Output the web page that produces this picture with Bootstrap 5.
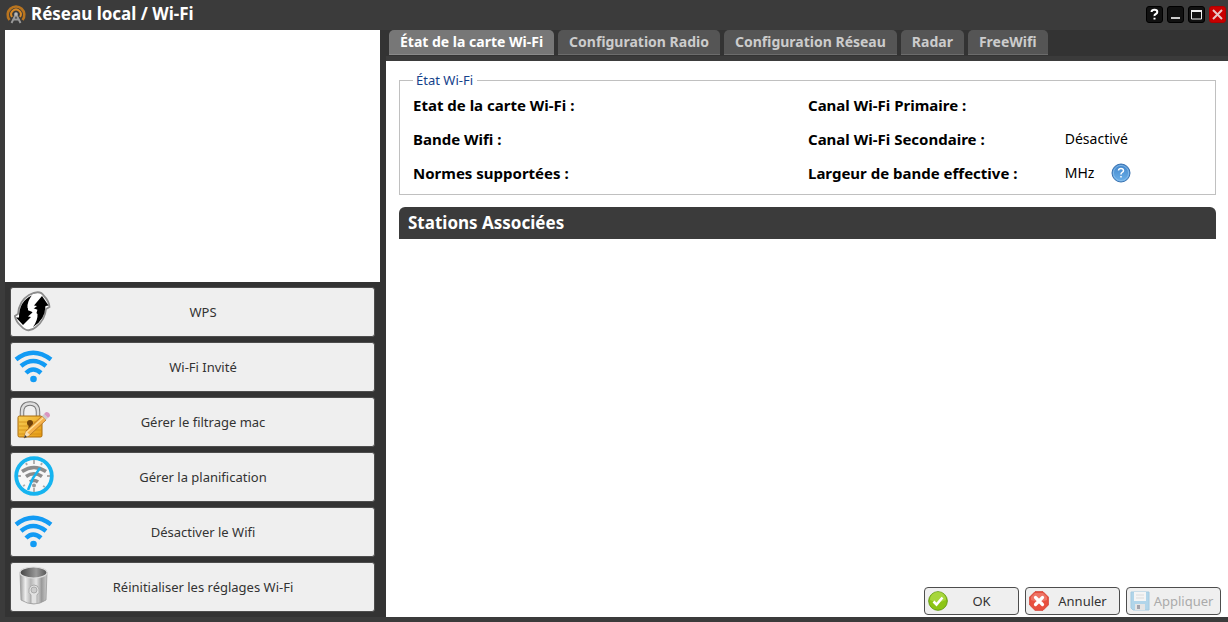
<!DOCTYPE html>
<html lang="fr">
<head>
<meta charset="utf-8">
<meta name="viewport" content="width=device-width, initial-scale=1">
<title>Réseau local / Wi-Fi</title>
<link href="https://cdn.jsdelivr.net/npm/bootstrap@5.3.0/dist/css/bootstrap.min.css" rel="stylesheet">
<style>
  body { font-family: Tahoma, "Noto Sans", sans-serif; font-size: 14px; line-height: 20px; color: #000; background: #3b3b3b; }
  .titlebar { height: 30px; padding: 0 2px 2px 5px; background: #3b3b3b; color: #fff; }
  .titlebar h1 { font-size: 17px; line-height: 20px; font-weight: 700; }
  .win-btn { width: 17px; height: 17px; padding: 0; border: 0; background: none; display: block; }
  .win-btn svg, .side-btn svg, .act-btn svg, .help-btn svg { display: block; flex: none; }
  .frame { background: #333; border-left: 5px solid #3b3b3b; border-bottom: 5px solid #3b3b3b; }
  .sidebar { width: 375px; }
  .side-list { padding: 5px; gap: 5px; }
  .side-btn { height: 50px; padding: 0 22px 0 3px; background: #efefef; border: 1px solid #4d4d4d; border-radius: 3px; color: #333; font-size: 13px; line-height: 20px; }
  .side-btn:hover { background: #fff; }
  .main-col { padding-left: 6px; }
  .tab-strip { gap: 4px; padding: 0 3px; height: 31px; border: 0; border-bottom: 5px solid #3b3b3b; }
  .tab-strip .nav-link { height: 25px; padding: 2px 11px 0; border: 0; border-bottom: 1px solid #6c6c6c; border-radius: 5px 5px 0 0; background: #555; color: #ccc; font-weight: 700; font-size: 14px; line-height: 20px; }
  .tab-strip .nav-link.active { background: #777; color: #fff; border-color: #8a8a8a; }
  .content-pane { background: #fff; padding: 10px 12px 0 13px; }
  .info-box { border: 1px solid #c0c0c0; padding: 6px 12px 11px 13px; margin-bottom: 12px; }
  .info-box legend { float: none; width: auto; margin: 0; padding: 0 4px 0 3px; font-size: 13px; line-height: 18px; color: #15428b; }
  .info-list { gap: 14px; }
  .info-line { height: 20px; }
  .info-line dt { flex: 0 0 65%; font-size: 15px; font-weight: 700; }
  .help-btn { border: 0; background: none; padding: 0; margin-left: 17px; }
  .section-head { background: #3b3b3b; color: #fff; border-radius: 6px 6px 0 0; font-size: 17px; line-height: 20px; font-weight: 700; padding: 6px 9px; margin: 0; }
  .actions { background: #fff; padding: 0 7px 2px; gap: 6px; }
  .act-btn { width: 95px; height: 28px; padding: 0 3px; background: #efefef; border: 1px solid #4d4d4d; border-radius: 4px; color: #333; font-size: 13px; line-height: 20px; }
  .act-btn:disabled { color: #aaa; border-color: #4d4d4d; background: #efefef; opacity: 1; }
  .act-btn:disabled svg { opacity: .55; }
</style>
</head>
<body class="d-flex flex-column min-vh-100">
<header class="titlebar d-flex align-items-center">
  <svg width="22" height="22" viewBox="0 0 22 22" fill="none" aria-hidden="true">
    <path d="M4.500 17A8.300 8.300 0 1 1 17.500 17" stroke="#b8741f" stroke-width="2.600"/>
    <path d="M7 14A4.800 4.800 0 1 1 15 14" stroke="#d88925" stroke-width="2"/>
    <path d="M11 11L6.500 20M11 11L15.500 20M8.500 16.500H13.500" stroke="#999" stroke-width="1.900"/>
    <circle cx="11" cy="11" r="1.800" fill="#bbb"/>
  </svg>
  <h1 class="m-0 ms-1">Réseau local / Wi-Fi</h1>
  <div class="ms-auto d-flex gap-1">
    <button type="button" class="win-btn" aria-label="Aide"><svg width="17" height="17" viewBox="0 0 17 17"><rect x=".5" y=".5" width="16" height="16" rx="2.500" fill="#111" stroke="#000"/><path d="M5.500 6Q5.700 3.700 8.500 3.700T11.300 6Q11.300 7.300 9.800 8T8.500 10M8.500 11.800V13.500" fill="none" stroke="#fff" stroke-width="2"/></svg></button>
    <button type="button" class="win-btn" aria-label="Réduire"><svg width="17" height="17" viewBox="0 0 17 17"><rect x=".5" y=".5" width="16" height="16" rx="2.500" fill="#111" stroke="#000"/><path d="M4 12H13" stroke="#ccc" stroke-width="2"/></svg></button>
    <button type="button" class="win-btn" aria-label="Agrandir"><svg width="17" height="17" viewBox="0 0 17 17"><rect x=".5" y=".5" width="16" height="16" rx="2.500" fill="#111" stroke="#000"/><path d="M3.500 5H13.500V13H3.500Z" fill="none" stroke="#eee"/><path d="M3 5H14" stroke="#eee" stroke-width="2"/></svg></button>
    <button type="button" class="win-btn" aria-label="Fermer"><svg width="17" height="17" viewBox="0 0 17 17"><rect x=".5" y=".5" width="16" height="16" rx="2.500" fill="#c90000" stroke="#b00000"/><path d="M4 4L13 13M13 4L4 13" stroke="#e9c5c5" stroke-width="2"/></svg></button>
  </div>
</header>

<div class="frame d-flex flex-grow-1">
  <aside class="sidebar d-flex flex-column flex-shrink-0">
    <div class="bg-white flex-grow-1"></div>
    <div class="side-list d-flex flex-column">
      <button type="button" class="side-btn d-flex align-items-center">
        <svg width="40" height="44" viewBox="0 0 40 44" aria-hidden="true">
          <path d="M15 5Q26-1 30 6Q35 11 35.500 17L32 19Q31 30 22 37Q14 44 7 36Q2 32 .8 26L4 24Q5 11 15 5Z" fill="#fff" stroke="#8c8c8c" stroke-width="1.800"/>
          <path d="M18 5.500Q13 11 13.500 18L19 22L14 26.500L17 27L9 35L2 27.500L5 27.500Q5 11 18 5.500Z" fill="#000"/>
          <path d="M19 37Q24 30 23.500 24L18 20L23 16L20 15.500L28 6L34.500 15.500L31.500 16Q31 30 19 37Z" fill="#000"/>
          <path d="M21 5Q16 11 16 19L21 21Q19 28 16 37" fill="none" stroke="#fff" stroke-width="4"/>
        </svg><span class="flex-grow-1">WPS</span>
      </button>
      <button type="button" class="side-btn d-flex align-items-center">
        <svg width="40" height="44" viewBox="0 0 40 44" aria-hidden="true" fill="none" stroke="#129bf4" stroke-width="4.500"><path d="M2 14.500Q19 1 37 14.500M7 21Q19 11 32 21M12 28Q19 21 27 28"/><circle cx="19.500" cy="34" r="3.300" fill="#129bf4" stroke="none"/></svg><span class="flex-grow-1">Wi-Fi Invité</span>
      </button>
      <button type="button" class="side-btn d-flex align-items-center">
        <svg width="40" height="44" viewBox="0 0 40 44" aria-hidden="true">
          <defs><linearGradient id="gold" x2="1" y2="1"><stop stop-color="#f8cf58"/><stop offset="1" stop-color="#e79a12"/></linearGradient></defs>
          <path d="M8 19V12Q8 3.500 16 3.500T24 12V19" fill="none" stroke="#777" stroke-width="4.500"/><path d="M8 19V12Q8 3.500 16 3.500T24 12V19" fill="none" stroke="#ddd" stroke-width="2.500"/>
          <rect x="4" y="16" width="24" height="21" rx="1.500" fill="url(#gold)" stroke="#a96a0b"/>
          <path d="M5 22H27M5 26H27M5 30H27M5 34H27" stroke="#d18d16" stroke-width=".8"/>
          <circle cx="16" cy="23" r="3" fill="#70420a"/><path d="M15 24H17L18 30H14Z" fill="#70420a"/>
          <path d="M10 38L12 31L28 16L32 20L16 35Z" fill="#f6b24c" stroke="#ad6d20" stroke-width=".8"/><path d="M13 32L29 18" stroke="#ffe09a" stroke-width="1.200"/><path d="M10 38L12 31L16 35Z" fill="#f6dfb8"/><path d="M10 38L11 35L13 37Z" fill="#333"/><path d="M28 16L30 14L34 18L32 20Z" fill="#ccc"/><path d="M30 14L32 12Q36 12 36 16L34 18Z" fill="#d996c0"/>
        </svg><span class="flex-grow-1">Gérer le filtrage mac</span>
      </button>
      <button type="button" class="side-btn d-flex align-items-center">
        <svg width="40" height="44" viewBox="0 0 40 44" aria-hidden="true">
          <circle cx="20" cy="21" r="17.800" fill="#f7f7f7" stroke="#16b4f0" stroke-width="3.800"/>
          <path d="M20 5V9M20 33V37M4 21H7M33 21H36M12 8L13 10M28 8L27 10M9 31L11 30M29 31L31 32" stroke="#aaa" stroke-width="1.800"/>
          <path d="M8 16.500Q20 8.500 32 16.500M12 21.500Q20 16 28 21.500M16 27Q20 24 24 27" fill="none" stroke="#8c8c8c" stroke-width="3.600"/><circle cx="20" cy="30.500" r="2" fill="#999"/>
          <path d="M26 13L19 23L14 35" fill="none" stroke="#16b4f0" stroke-width="2.500"/>
        </svg><span class="flex-grow-1">Gérer la planification</span>
      </button>
      <button type="button" class="side-btn d-flex align-items-center">
        <svg width="40" height="44" viewBox="0 0 40 44" aria-hidden="true" fill="none" stroke="#129bf4" stroke-width="4.500"><path d="M2 14.500Q19 1 37 14.500M7 21Q19 11 32 21M12 28Q19 21 27 28"/><circle cx="19.500" cy="34" r="3.300" fill="#129bf4" stroke="none"/></svg><span class="flex-grow-1">Désactiver le Wifi</span>
      </button>
      <button type="button" class="side-btn d-flex align-items-center">
        <svg width="40" height="44" viewBox="0 0 40 44" aria-hidden="true">
          <defs><linearGradient id="steel"><stop stop-color="#999"/><stop offset=".2" stop-color="#eee"/><stop offset=".4" stop-color="#b5b5b5"/><stop offset=".6" stop-color="#e5e5e5"/><stop offset=".8" stop-color="#999"/><stop offset="1" stop-color="#ccc"/></linearGradient><linearGradient id="hollow"><stop stop-color="#444"/><stop offset=".6" stop-color="#999"/><stop offset="1" stop-color="#555"/></linearGradient></defs>
          <path d="M6 7L7 35Q20 43 32 35L33 7Z" fill="url(#steel)" stroke="#999" stroke-width=".8"/>
          <ellipse cx="19.500" cy="7.500" rx="13.500" ry="5.500" fill="url(#hollow)" stroke="#ddd" stroke-width="1.200"/>
          <path d="M17 38V30Q14 28 15 24T20 20T25 24T23 30V38" fill="#e2e2e2" stroke="#aaa"/><circle cx="20" cy="25" r="3" fill="#ccc" stroke="#aaa"/>
        </svg><span class="flex-grow-1">Réinitialiser les réglages Wi-Fi</span>
      </button>
    </div>
  </aside>

  <main class="main-col d-flex flex-column flex-grow-1">
    <ul class="nav nav-tabs tab-strip">
      <li class="nav-item"><a class="nav-link active" href="#" aria-current="page">État de la carte Wi-Fi</a></li>
      <li class="nav-item"><a class="nav-link" href="#">Configuration Radio</a></li>
      <li class="nav-item"><a class="nav-link" href="#">Configuration Réseau</a></li>
      <li class="nav-item"><a class="nav-link" href="#">Radar</a></li>
      <li class="nav-item"><a class="nav-link" href="#">FreeWifi</a></li>
    </ul>
    <div class="content-pane flex-grow-1">
      <fieldset class="info-box">
        <legend>État Wi-Fi</legend>
        <div class="row g-0">
          <dl class="info-list col-6 m-0 d-flex flex-column">
            <div class="info-line"><dt>Etat de la carte Wi-Fi :</dt></div>
            <div class="info-line"><dt>Bande Wifi :</dt></div>
            <div class="info-line"><dt>Normes supportées :</dt></div>
          </dl>
          <dl class="info-list col-6 m-0 d-flex flex-column">
            <div class="info-line d-flex"><dt>Canal Wi-Fi Primaire :</dt><dd class="m-0"></dd></div>
            <div class="info-line d-flex"><dt>Canal Wi-Fi Secondaire :</dt><dd class="m-0">Désactivé</dd></div>
            <div class="info-line d-flex"><dt>Largeur de bande effective :</dt><dd class="m-0 d-flex align-items-start">MHz
              <button type="button" class="help-btn" aria-label="Aide"><svg width="20" height="20" viewBox="0 0 20 20"><defs><linearGradient id="blue" x2="0" y2="1"><stop stop-color="#3f83c9"/><stop offset="1" stop-color="#6db2ea"/></linearGradient></defs><circle cx="10" cy="10" r="9" fill="url(#blue)" stroke="#3a72b0"/><circle cx="10" cy="10" r="7.600" fill="none" stroke="#8dc0ec" stroke-width=".8"/><path d="M7.500 7.500Q7.700 5.500 10 5.500T12.500 7.500Q12.500 8.700 11.200 9.400T10 11.500M10 13V14.500" fill="none" stroke="#fff" stroke-width="1.500"/></svg></button></dd></div>
          </dl>
        </div>
      </fieldset>
      <h2 class="section-head">Stations Associées</h2>
    </div>
    <div class="actions d-flex justify-content-end">
      <button type="button" class="act-btn d-flex align-items-center">
        <svg width="20" height="20" viewBox="0 0 20 20" aria-hidden="true"><circle cx="10" cy="10" r="9.300" fill="#8cc516" stroke="#689d18"/><path d="M2 9A8 8 0 0 1 18 9Q10 13 2 9Z" fill="#a7d63c"/><path d="M5.500 10.500L8.500 13.500L14.500 6.500" fill="none" stroke="#fff" stroke-width="2.600"/></svg><span class="flex-grow-1">OK</span>
      </button>
      <button type="button" class="act-btn d-flex align-items-center">
        <svg width="20" height="20" viewBox="0 0 20 20" aria-hidden="true"><path d="M6 .7H14L19.300 6V14L14 19.300H6L.7 14V6Z" fill="#e8503f" stroke="#d5483b"/><path d="M6 2H14L18 6V9Q10 12 2 9V6Z" fill="#ee7466"/><path d="M6.500 6.500L13.500 13.500M13.500 6.500L6.500 13.500" stroke="#fff" stroke-width="3.200" stroke-linecap="round"/></svg><span class="flex-grow-1">Annuler</span>
      </button>
      <button type="button" class="act-btn d-flex align-items-center" disabled>
        <svg width="20" height="20" viewBox="0 0 20 20" aria-hidden="true"><path d="M1 1H19V19H3L1 17Z" fill="#7fc0e6" stroke="#6aaed6"/><rect x="4" y="1" width="12" height="9" fill="#fafafa"/><path d="M6 4H14M6 7H14" stroke="#ccc"/><rect x="5" y="13" width="10" height="6" fill="#ddd"/><rect x="7" y="14" width="3" height="4" fill="#667"/></svg><span class="flex-grow-1">Appliquer</span>
      </button>
    </div>
  </main>
</div>
<script src="https://cdn.jsdelivr.net/npm/bootstrap@5.3.0/dist/js/bootstrap.bundle.min.js"></script>
</body>
</html>
